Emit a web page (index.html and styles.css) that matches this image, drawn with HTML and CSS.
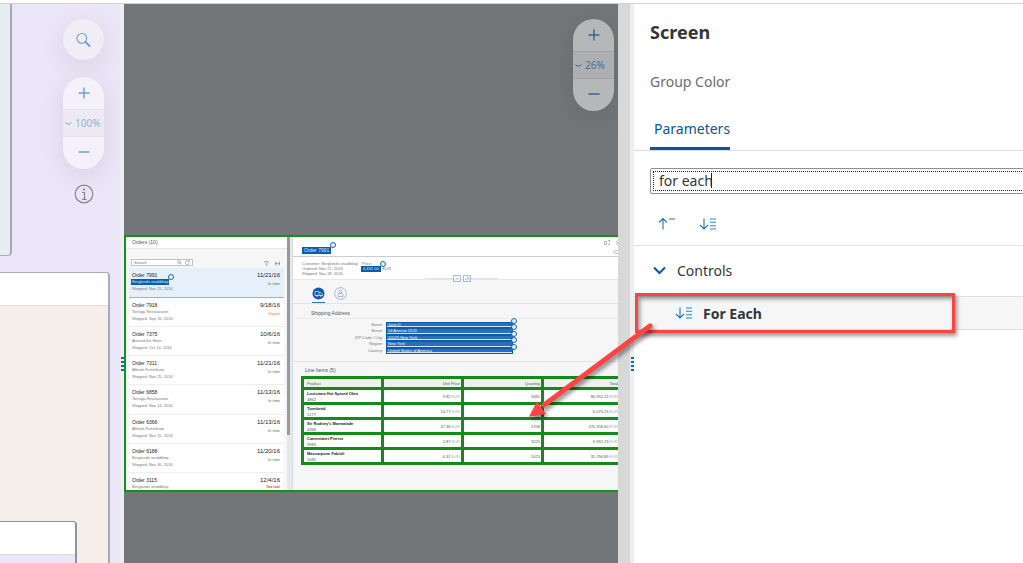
FILE: index.html
```html
<!DOCTYPE html>
<html lang="en">
<head>
<meta charset="utf-8">
<title>Screen parameters</title>
<link rel="stylesheet" href="styles.css">
</head>
<body>
<header class="topbar"></header>
<main class="workspace">
  <section class="canvas" aria-label="Flow canvas">
    <div class="node node-teal"></div>
    <div class="node node-group"><div class="node-head"></div></div>
    <div class="node node-inner"><div class="node-head"></div></div>
    <div class="tools">
      <button class="round" aria-label="Search"><svg width="15" height="16" viewBox="0 0 16 16"><circle cx="6.2" cy="6.2" r="5.2"/><path d="M10 10l5 5" stroke-width="2.2"/></svg></button>
      <div class="pill">
        <button aria-label="Zoom in"><svg width="12" height="12" viewBox="0 0 12 12"><path d="M6 .5v11M.5 6h11"/></svg></button>
        <button class="level"><svg width="7" height="5" viewBox="0 0 7 5"><path d="M.5 1.500q3 3.500 6 0"/></svg>100%</button>
        <button aria-label="Zoom out"><svg width="12" height="12" viewBox="0 0 12 12"><path d="M.5 6h11"/></svg></button>
      </div>
      <button class="info" aria-label="Information"><svg width="20" height="20" viewBox="0 0 20 20"><circle cx="10" cy="10" r="8.8"/><path d="M8 8.5h2.5V15M8 15.3h4.5"/><path d="M10 4.5v2" stroke-width="1.8"/></svg></button>
    </div>
  </section>
  <div class="splitter"><i></i></div>

  <section class="preview" aria-label="Screen preview">
    <div class="pill dim">
      <button aria-label="Zoom in"><svg width="12" height="12" viewBox="0 0 12 12"><path d="M6 .5v11M.5 6h11"/></svg></button>
      <button class="level"><svg width="7" height="5" viewBox="0 0 7 5"><path d="M.5 1.500q3 3.500 6 0"/></svg>26%</button>
      <button aria-label="Zoom out"><svg width="12" height="12" viewBox="0 0 12 12"><path d="M.5 6h11"/></svg></button>
    </div>
    <div class="app">
      <div class="master">
        <div class="master-title">Orders (10)</div>
        <div class="master-tools">
          <label class="find"><input type="text" placeholder="Search" aria-label="Search orders"><svg width="13" height="5" viewBox="0 0 13 5"><circle cx="2" cy="2" r="1.4"/><path d="M3 3l1.6 1.6M12 1.5a2 2 0 1 0 .3 1.6M12.3 0v1.7h-1.5"/></svg></label>
          <svg width="16" height="5" viewBox="0 0 16 5"><path d="M.5.5h4L3 2.7v2L2 4V2.7zM11.500.500v4M15.500.500v4M11.500 2.500h4M13 1.500l-1.500 1 1.500 1M14 1.500l1.500 1-1.500 1"/></svg>
        </div>
        <ul class="orders">
          <li class="selected"><div><b>Order 7991</b><span class="mark">Berglunds snabbköp<i></i></span><span>Shipped: Nov 25, 2016</span></div><div class="when"><b>11/21/16</b><em>In time</em></div></li>
          <li><div><b>Order 7918</b><span>Tortuga Restaurante</span><span>Shipped: Sep 26, 2016</span></div><div class="when"><b>9/18/16</b><em class="urgent">Urgent</em></div></li>
          <li><div><b>Order 7375</b><span>Around the Horn</span><span>Shipped: Oct 14, 2016</span></div><div class="when"><b>10/6/16</b><em>In time</em></div></li>
          <li><div><b>Order 7311</b><span>Alfreds Futterkiste</span><span>Shipped: Nov 25, 2016</span></div><div class="when"><b>11/21/16</b><em>In time</em></div></li>
          <li><div><b>Order 6858</b><span>Tortuga Restaurante</span><span>Shipped: Nov 14, 2016</span></div><div class="when"><b>11/13/16</b><em>In time</em></div></li>
          <li><div><b>Order 6366</b><span>Alfreds Futterkiste</span><span>Shipped: Nov 15, 2016</span></div><div class="when"><b>11/13/16</b><em>In time</em></div></li>
          <li><div><b>Order 6188</b><span>Berglunds snabbköp</span><span>Shipped: Nov 30, 2016</span></div><div class="when"><b>11/20/16</b><em>In time</em></div></li>
          <li><div><b>Order 3115</b><span>Berglunds snabbköp</span></div><div class="when"><b>12/4/16</b><em class="late">Too late</em></div></li>
        </ul>
      </div>
      <div class="rail"><div class="thumb"></div></div>
      <div class="detail">
        <div class="detail-top">
          <span class="mark title">Order 7991<i></i></span>
          <svg width="14" height="15" viewBox="0 0 14 15"><path d="M.500 1.500h2v3h-2zM4 .500h2M5.500.500v2M4 4.500h2M12 1l2 2-2 2M10 13v-2h3l1-1M11 13.500h3"/></svg>
        </div>
        <div class="facts">
          <div><span>Customer: Berglunds snabbköp</span><span>Ordered: Nov 21, 2016</span><span>Shipped: Nov 28, 2016</span></div>
          <div><span>Price</span><span class="money"><span class="mark">6,432.00<i></i></span>EUR</span></div>
          <svg class="pin" width="74" height="7" viewBox="0 0 74 7"><path d="M0 3.500h28M46 3.500h28" opacity=".45"/><path d="M28.500.500h7v6h-7zM38.500.500h7v6h-7zM31 4l1-1 1 1M40.500 5l3-3M42 2l2 2"/></svg>
        </div>
        <div class="tabs">
          <button class="on" aria-label="Shipping"><svg width="13" height="13" viewBox="0 0 13 13"><circle cx="6.500" cy="6.500" r="6" class="fill"/><path class="light" d="M3 4.500h4v4H3zM7 5.500h2l1.500 1.500v1.500H7"/><circle class="light" cx="5" cy="8.800" r=".7"/><circle class="light" cx="8.800" cy="8.800" r=".7"/></svg></button>
          <button aria-label="Processor"><svg width="13" height="13" viewBox="0 0 13 13"><circle cx="6.500" cy="6.500" r="5.900"/><circle cx="6.500" cy="4.600" r="1.500"/><path d="M4 9.500V8q0-1.500 1.500-1.500h2Q9 6.500 9 8v1.500z"/></svg></button>
        </div>
        <h3>Shipping Address</h3>
        <dl class="address">
          <dt>Name:</dt><dd>Jane D<i></i></dd>
          <dt>Street:</dt><dd>56 Avenue 5123<i></i></dd>
          <dt>ZIP Code / City:</dt><dd>10025 New York<i></i></dd>
          <dt>Region:</dt><dd>New York<i></i></dd>
          <dt>Country:</dt><dd>United States of America<i></i></dd>
        </dl>
        <h4>Line Items (5)</h4>
        <table>
          <thead><tr><th>Product</th><th>Unit Price</th><th>Quantity</th><th>Total</th></tr></thead>
          <tbody>
            <tr><td><b>Louisiana Hot Spiced Okra</b>4862</td><td>9.82 <s>EUR</s></td><td>9481</td><td>86,992.22 <s>EUR</s></td></tr>
            <tr><td><b>Tunnbröd</b>1277</td><td>14.77 <s>EUR</s></td><td>411</td><td>6,073.23 <s>EUR</s></td></tr>
            <tr><td><b>Sir Rodney's Marmalade</b>4368</td><td>47.36 <s>EUR</s></td><td>5708</td><td>270,358.60 <s>EUR</s></td></tr>
            <tr><td><b>Camembert Pierrot</b>3983</td><td>2.87 <s>EUR</s></td><td>3225</td><td>9,992.73 <s>EUR</s></td></tr>
            <tr><td><b>Mascarpone Fabioli</b>5085</td><td>6.31 <s>EUR</s></td><td>5025</td><td>31,796.89 <s>EUR</s></td></tr>
          </tbody>
        </table>
      </div>
    </div>
  </section>
  <div class="scroll"></div>
  <div class="splitter"><i></i></div>

  <aside class="panel">
    <h1>Screen</h1>
    <h2>Group Color</h2>
    <nav class="panel-tabs"><button>Parameters</button></nav>
    <div class="search"><input type="text" value="for each" aria-label="Search parameters"><span class="caret"></span></div>
    <div class="actions">
      <button aria-label="Collapse all"><svg width="18" height="14" viewBox="0 0 18 14"><path d="M5 12.500V1.500M1 5.500l4-4 4 4M11 2h6"/></svg></button>
      <button aria-label="For each"><svg width="18" height="14" viewBox="0 0 18 14"><path d="M5 1.500v10.500M1 8l4 4 4-4"/><path class="bars" d="M11 2h6M11 5.300h6M11 8.700h6M11 12h6"/></svg></button>
    </div>
    <button class="group"><svg width="13" height="9" viewBox="0 0 13 9"><path d="M1 1.500l5.500 5.500L12 1.500"/></svg>Controls</button>
    <button class="item"><span class="chip"><svg width="18" height="14" viewBox="0 0 18 14"><path d="M5 1.500v10.500M1 8l4 4 4-4"/><path class="bars" d="M11 2h6M11 5.300h6M11 8.700h6M11 12h6"/></svg></span>For Each<span class="callout"></span>
      <svg class="arrow" width="130" height="100" viewBox="0 0 130 100"><path d="M124 4L18 83" class="shaft"/><path d="M4 94L11 80.500L19 91.500z" class="head"/></svg>
    </button>
  </aside>
</main>
</body>
</html>
```

FILE: styles.css
```css
* { box-sizing: border-box; }
body {
  margin: 0;
  height: 100vh;
  display: flex;
  flex-direction: column;
  overflow: hidden;
  background: #fff;
  color: #32363a;
  font-family: "Noto Sans", "Open Sans", sans-serif;
  font-size: 14px;
}
button, input { font: inherit; color: inherit; border: 0; background: none; padding: 0; margin: 0; }
svg { fill: none; stroke: #2a70b0; flex: none; }
h1, h2, h3, h4, ul, dl, dd { margin: 0; padding: 0; font-weight: 400; }
.topbar { height: 4px; flex: none; border-bottom: 1px solid #d0d0d0; }
.workspace { flex: 1; display: flex; min-height: 0; }

/* flow canvas */
.canvas { position: relative; width: 120px; flex: none; overflow: hidden; background: #ebe6f7; }
.node { position: absolute; left: -6px; border: 1px solid #a5acb8; border-width: 1px 2px 1px 1px; border-radius: 4px; overflow: hidden; }
.node-head { height: 33px; background: #fff; border-bottom: 1px solid #dcdcdc; }
.node-teal { top: -6px; width: 18px; height: 258px; background: #e6eeef; }
.node-group { top: 268px; width: 116px; bottom: -6px; background: #f6eee8; }
.node-inner { top: 517px; width: 83px; bottom: -6px; background: #ebe6f7; border-color: #8a94a3; }
.tools { position: absolute; top: 15px; right: 16px; display: flex; flex-direction: column; align-items: center; gap: 17px; }
.tools svg { stroke: #6fa0cf; stroke-width: 1.2; }
.round { width: 41px; height: 41px; border-radius: 50%; background: #f0edf6; display: grid; place-items: center; box-shadow: 0 6px 20px 3px #dcd6e8; }
.pill { width: 41px; border-radius: 21px; background: #f4f1fa; display: flex; flex-direction: column; overflow: hidden; color: #8db2d4; box-shadow: 0 6px 20px 3px #dcd6e8; }
.pill button { height: 32px; display: flex; align-items: center; justify-content: center; gap: 3px; }
.pill button:last-child { padding-bottom: 3px; }
.pill .level { height: 28px; justify-content: flex-start; padding-left: 2px; font-size: 10px; background: #eeeaf4; border: solid #e6e2ec; border-width: 1px 0; }
.pill svg { stroke-width: 1.5; }
.pill .level svg { stroke-width: 1; }
.tools .info { height: 20px; margin-top: -2px; }
.tools .info svg { stroke: #85858a; stroke-width: 1.2; }

.splitter { width: 4px; flex: none; background: #eceef1; display: flex; align-items: center; justify-content: flex-end; padding-top: 161px; }
.splitter i { width: 3px; height: 15px; background: repeating-linear-gradient(#0a6ab8 0 2px, transparent 2px 4px); }

/* preview */
.preview { position: relative; width: 494px; flex: none; background: #727679; overflow: hidden; padding-top: 231px; }
.dim { position: absolute; top: 15px; right: 4px; background: #b5b7b9; color: #4a6d99; box-shadow: 0 5px 18px 3px #696d70; }
.dim .level { background: #adafb1; border-color: #a0a3a5; }
.dim svg { stroke: #3a6390; }
.scroll { width: 12px; flex: none; background: #d8d8d8; }
.app { height: 257px; display: flex; border: solid #16911a; border-width: 2px 0 2px 2px; background: #f6f6f6; font: 4px/5px "Liberation Sans", Arial, sans-serif; color: #777; overflow: hidden; }
.app svg { stroke: #6b93bd; stroke-width: .6; }
.app b, .app em, .app i, .app s { font-style: normal; text-decoration: none; }
.master { width: 161px; flex: none; display: flex; flex-direction: column; padding-right: 3px; }
.master-title { height: 12px; flex: none; padding: 3px 6px; font-size: 5px; background: #fff; border-bottom: 1px solid #e5e5e5; margin-right: -3px; color: #555; }
.master-tools { height: 19px; flex: none; display: flex; justify-content: space-between; align-items: flex-end; padding: 0 4px 2px 5px; }
.find { display: flex; align-items: center; width: 62px; height: 7px; border: 1px solid #c0c3c8; background: #fff; padding: 0 2px; }
.find input { flex: 1; min-width: 0; height: 5px; font-size: 4px; font-style: italic; }
.orders { list-style: none; overflow: hidden; flex: 1; padding-left: 3px; }
.orders li { height: 29px; display: flex; justify-content: space-between; background: #fff; border-bottom: 1px solid #eee; padding: 4px 4px 0 3px; }
.orders li:nth-child(4n+1) { height: 30px; }
.orders .selected { background: #e5f0fa; border-color: #91b5d9; }
.orders div { display: flex; flex-direction: column; align-items: flex-start; }
.orders b { font-size: 5px; line-height: 6px; margin-bottom: 1px; font-weight: 400; color: #222; }
.orders span { line-height: 6px; margin-bottom: 1px; }
.orders li:last-child span { line-height: 5px; margin: 0; }
.orders .when { align-items: flex-end; }
.when b { font-size: 6px; }
.when em { margin-top: 2px; color: #398a4a; }
.when .urgent { color: #df7b2a; }
.when .late { margin-top: 0; color: #c00; }
.app .mark { position: relative; background: #0a5cb0; color: #dcebfa; padding: 0 1px; margin-left: -1px; }
.app i { position: absolute; left: calc(100% - 1px); top: -5px; width: 6px; height: 6px; border: 1px solid #1767b3; border-radius: 50%; background: #e8f1fa; }
.rail { width: 5px; flex: none; background: #e8e8e8; }
.thumb { width: 3px; height: 198px; background: #999; }
.detail { flex: 1; min-width: 0; border-left: 1px solid #cfdcea; overflow: hidden; }
.detail-top { height: 20px; display: flex; justify-content: space-between; padding: 3px 0 0 9px; background: #fff; border-bottom: 1px solid #ccc; }
.detail-top .mark { align-self: flex-start; margin: 7px 0 0; height: 7px; line-height: 7px; font-size: 5px; padding: 0 2px; }
.facts { position: relative; height: 23px; display: flex; gap: 4px; padding: 4px 9px 0; background: #fff; border-bottom: 1px solid #e8e8e8; }
.facts > div { display: flex; flex-direction: column; }
.facts .money { display: flex; gap: 2px; }
.facts .money .mark { height: 6px; padding: 0 2px; }
.pin { position: absolute; left: 132px; bottom: -3px; }
.tabs { display: flex; gap: 9px; padding: 6px 19px 0; height: 24px; border-bottom: 1px solid #e2e2e2; }
.tabs button { width: 13px; line-height: 0; padding-bottom: 2px; }
.tabs .on { border-bottom: 1px solid #2b74b9; }
.app .fill { fill: #0a5cb0; stroke: none; }
.app .light { stroke: #fff; }
.detail h3 { font-size: 5px; line-height: 5px; padding: 7px 18px 3px; height: 15px; border-bottom: 1px solid #ebebeb; color: #555; }
.address { display: grid; grid-template-columns: 90px 127px; column-gap: 3px; grid-auto-rows: 6px 7px; padding: 3px 0 7px; border-bottom: 1px solid #e2e2e2; text-align: right; }
.address dt { line-height: 6px; }
.address dd { position: relative; border: 1px solid #0a5cb0; background: #2a70b8; color: #eef6ff; text-align: left; line-height: 4px; padding-left: 1px; box-shadow: inset 0 -1px #d5e5f4; }
.detail h4 { font-size: 5px; line-height: 5px; padding: 6px 12px 3px; color: #555; }
.detail table { width: 321px; margin-left: 8px; table-layout: fixed; border-collapse: collapse; background: #fff; }
.detail th, .detail td { width: 80px; height: 15px; border: 3px solid #15891a; padding: 0 1px; font-weight: 400; text-align: right; line-height: 5px; color: #555; }
.detail th { height: 11px; background: #f0f0f0; }
.detail th:last-child, .detail td:last-child { padding-right: 3px; }
.detail th:first-child, .detail td:first-child { text-align: left; padding-left: 3px; }
.detail td b { display: block; color: #222; margin-bottom: 1px; }
.detail s { color: #aaa; }

/* parameter panel */
.panel { flex: 1; min-width: 0; padding-top: 16px; display: flex; flex-direction: column; background: #fff; }
.panel h1 { font-size: 18px; line-height: 24px; font-weight: 700; padding-left: 16px; }
.panel h2 { font-size: 14px; line-height: 20px; margin-top: 28px; padding-left: 16px; color: #6a6d70; }
.panel-tabs { margin-top: 27px; padding-left: 16px; border-bottom: 1px solid #ddd; display: flex; }
.panel-tabs button { width: 80px; color: #0854a0; line-height: 20px; padding: 0 0 8px 4px; text-align: left; border-bottom: 3px solid #0854a0; }
.search { display: flex; align-items: center; height: 26px; margin: 17px -8px 0 16px; padding: 2px; border: 1px solid #89919a; border-radius: 2px; position: relative; flex: none; }
.search input { flex: 1; height: 20px; padding: 0 0 2px 5px; border: 1px dotted #222; outline: 0; }
.caret { position: absolute; left: 60px; top: 4px; width: 1px; height: 15px; background: #222; }
.actions { height: 52px; flex: none; display: flex; gap: 23px; padding: 23px 24px 0; border-bottom: 1px solid #ddd; }
.actions button { width: 18px; height: 14px; line-height: 0; }
.panel svg { stroke-width: 1.1; }
.bars { stroke: #1b8ccf; }
.group { height: 50px; display: flex; align-items: center; gap: 11px; padding: 0 0 2px 19px; }
.panel .group svg { stroke: #0854a0; stroke-width: 2; }
.item { position: relative; height: 34px; flex: none; display: flex; align-items: center; gap: 6px; padding-left: 37px; border: solid #e0e0e0; border-width: 1px 0; background: #f6f6f6; font-weight: 700; }
.chip { width: 26px; height: 22px; display: grid; place-items: center; background: #f0f7fd; }
.callout { position: absolute; left: 1px; top: -4px; width: 320px; height: 40px; border: 3px solid #fb4444; box-shadow: 2px 3px 4px #0006, inset 2px 3px 4px #0006; }
.arrow { position: absolute; left: -108px; top: 25px; filter: drop-shadow(2px 3px 2px #0007); }
.panel .shaft { stroke: #fb4444; stroke-width: 5; stroke-linecap: round; }
.head { fill: #fb4444; stroke: #fb4444; }
```
